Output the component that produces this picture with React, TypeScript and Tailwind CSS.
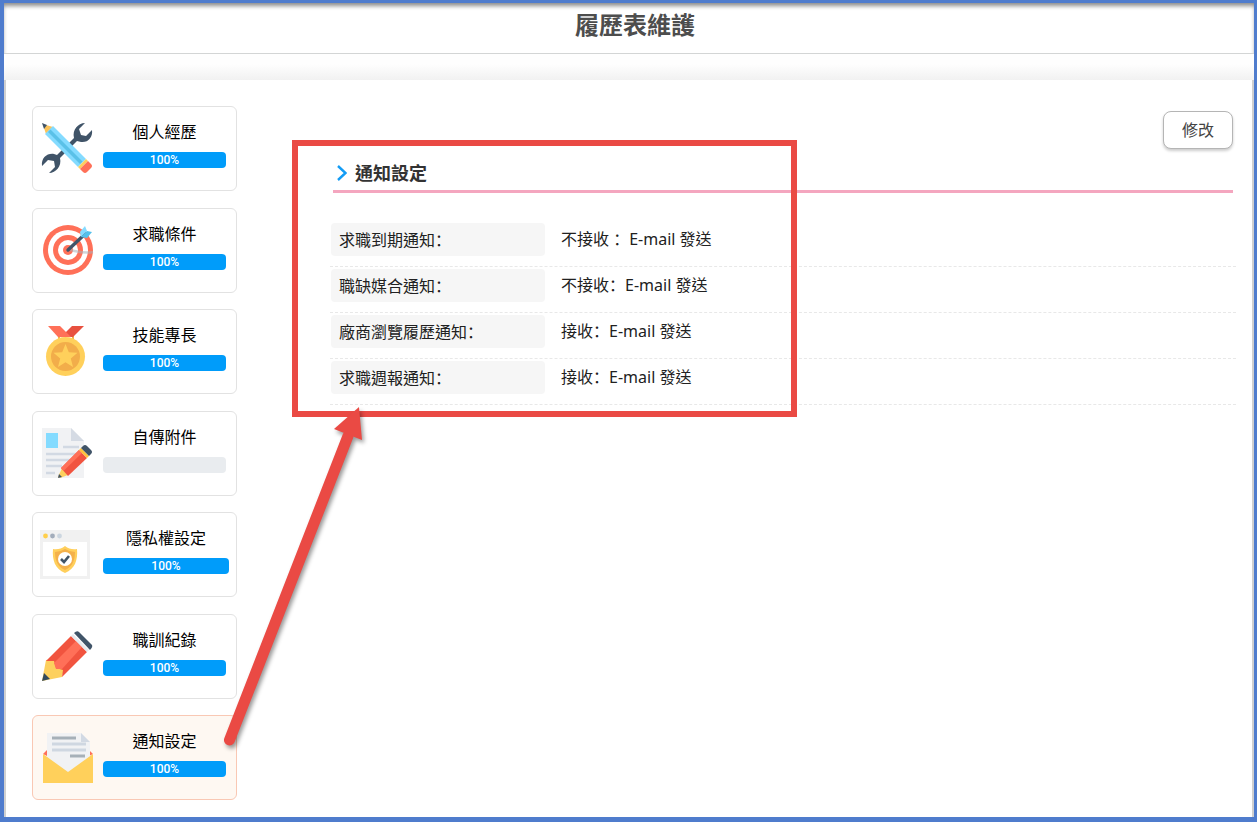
import type { ReactNode } from 'react'
import clsx from 'clsx'

type Step = { id: string; label: string; progress: number; icon: ReactNode }

const icons = {
  tools: (
    <>
      <path fill="#405468" d="M43 0 37 6 39 12 44 13 50 7C51 14 46 20 39 19L35 18 18 35C20 43 14 50 7 50L13 44 12 38 6 37 0 43C-1 35 5 30 12 31L15 32 32 15C30 7 36 0 43 0Z" />
      <path fill="#fbc35a" d="M4 2 11 4 4 11 2 5Z" />
      <path fill="#405468" d="M0 0 5 2 2 6Z" />
      <path fill="#84dbff" d="M11 3 44 36 36 44 3 11Z" />
      <path fill="#5ac1e8" d="M8.5 6.5 40.5 38.5 38 41 6 9Z" />
      <path fill="#fdd05e" d="M44 36 46 38 38 46 36 44Z" />
      <path fill="#ff7058" d="M46 38 49 41Q51 43 49 45L45 49Q43 51 41 49L38 46Z" />
    </>
  ),
  target: (
    <>
      <circle cx="26" cy="25" r="25" fill="#ff7058" />
      <circle cx="26" cy="25" r="20" fill="#fff" />
      <circle cx="26" cy="25" r="15" fill="#ff7058" />
      <circle cx="26" cy="25" r="10" fill="#fff" />
      <circle cx="26" cy="25" r="5" fill="#ff7058" />
      <path d="M28 25C34 26 42 29 51 27" stroke="#aab0b8" strokeOpacity=".55" strokeWidth="2.5" fill="none" />
      <path d="M26 25 43 9" stroke="#405468" strokeWidth="3.4" strokeLinecap="round" />
      <path fill="#84dbff" d="M43 1 45 6 39 12 38 7Z" />
      <path fill="#54c0eb" d="M45 6 50 7 45 13 39 12Z" />
    </>
  ),
  medal: (
    <>
      <path fill="#f2b04a" d="M16 9H32V15H16Z" />
      <path fill="#fff" d="M18 11H30V13H18Z" />
      <circle cx="23.5" cy="30.5" r="19.5" fill="#ffd05b" />
      <circle cx="23.5" cy="30.5" r="14.5" fill="#f2ad4a" />
      <path fill="#ffd05b" d="M23.5 18 26.8 26.2 35.5 26.8 28.8 32.4 31 41 23.5 36.2 16 41 18.2 32.4 11.5 26.8 20.2 26.2Z" />
      <path fill="#e8513f" d="M30 0H42L31 11H19Z" />
      <path fill="#ff7058" d="M6 0H18L29 11H16Z" />
    </>
  ),
  resume: (
    <>
      <path fill="#f1f2f4" d="M0 0H29L42 13V50H0Z" />
      <path fill="#d5dbe4" d="M29 0 42 13H29Z" />
      <path fill="#84dbff" d="M4 5H16V20H4Z" />
      <path d="M21 19H37M4 26H34M4 32H28M4 38H20M4 45H13" stroke="#d2d9e3" strokeWidth="2.5" />
      <path fill="#fdd05e" d="M20 40 26 47 18 50 16 49Z" />
      <path fill="#405468" d="M17 46 20 49 16 50Z" />
      <path fill="#f1543f" d="M37 22 45 30 26 48 19 40Z" />
      <path fill="#ff7058" d="M37 22 40 25 21.5 43 19 40Z" />
      <path fill="#fdc33f" d="M39 20 47 28 45 30 37 22Z" />
      <path fill="#405468" d="M41 18Q43 16 45 18L49 22Q51 24 49 26L47 28 39 20Z" />
    </>
  ),
  shield: (
    <>
      <path fill="#f1f1f1" d="M-2 1H48V50H-2Z" />
      <path fill="#fff" d="M1 13H45V47H1Z" />
      <circle cx="3.5" cy="7" r="2.4" fill="#ffcf4a" />
      <circle cx="10.5" cy="7" r="2.4" fill="#a3adbb" />
      <circle cx="17.5" cy="7" r="2.4" fill="#ccd6e0" />
      <path fill="#ffcf5b" d="M23 17Q28 21 35 20C36 31 33 40 23 44 13 40 10 31 11 20Q18 21 23 17Z" />
      <path fill="#f4b14b" d="M23 20Q28 23 33 23C33 32 30 38 23 41 16 38 13 32 13 23Q18 23 23 20Z" />
      <circle cx="23" cy="30" r="7" fill="#fff" />
      <path d="M19 30 22 33 27 27" stroke="#405468" strokeWidth="2.6" fill="none" />
    </>
  ),
  pencil: (
    <>
      <path fill="#fdd05e" d="M4 29 13 28 22 38 20 46 0 50Z" />
      <path fill="#334a5e" d="M2 42 8 48 0 50Z" />
      <path fill="#f1543f" d="M29 5 45 21 20 46 21 39 14 37 12 30 4 30Z" />
      <path fill="#ff7058" d="M34 10 40 16 20 38 14 38 12 32Z" />
      <path fill="#e6e9ee" d="M31 3 47 19 45 21 29 5Z" />
      <path fill="#405468" d="M32 2Q35 -1 37 1L50 14Q51 16 48 19Z" />
    </>
  ),
  mail: (
    <>
      <path fill="#ff7058" d="M1 22 5 18V24ZM51 22 47 18V24Z" />
      <path fill="#f1f2f4" d="M5 1H39L48 10V30L26 44 5 30Z" />
      <path fill="#d2d9e3" d="M39 1 48 10H39Z" />
      <path d="M10 6H34" stroke="#a6b0b8" strokeWidth="3" />
      <path d="M10 12H44M10 18H44" stroke="#cfd7e1" strokeWidth="3" />
      <path d="M28 24H43" stroke="#a6b0b8" strokeWidth="3" />
      <path fill="#ffd05b" d="M1 22 26 40 51 22V51H1Z" />
    </>
  ),
}

const steps: Step[] = [
  { id: 'experience', label: '個人經歷', progress: 100, icon: icons.tools },
  { id: 'conditions', label: '求職條件', progress: 100, icon: icons.target },
  { id: 'skills', label: '技能專長', progress: 100, icon: icons.medal },
  { id: 'attachments', label: '自傳附件', progress: 0, icon: icons.resume },
  { id: 'privacy', label: '隱私權設定', progress: 100, icon: icons.shield },
  { id: 'training', label: '職訓紀錄', progress: 100, icon: icons.pencil },
  { id: 'notify', label: '通知設定', progress: 100, icon: icons.mail },
]

const settings = [
  { name: '求職到期通知', value: '不接收 ', channel: 'E-mail 發送' },
  { name: '職缺媒合通知', value: '不接收', channel: 'E-mail 發送' },
  { name: '廠商瀏覽履歷通知', value: '接收', channel: 'E-mail 發送' },
  { name: '求職週報通知', value: '接收', channel: 'E-mail 發送' },
]

// the SC face keeps the fullwidth colon next to the preceding character
function Colon() {
  return <span lang="zh-CN" className="font-['Noto_Sans_CJK_SC',sans-serif]">：</span>
}

function StepCard({ step, active }: { step: Step; active: boolean }) {
  return (
    <a
      href={`#${step.id}`}
      aria-current={active ? 'page' : undefined}
      className={clsx(
        'flex h-[85px] items-start gap-[11px] rounded-md border pt-[13px] pl-[9px]',
        active ? 'border-[#f9c8b4] bg-[#fef8f2]' : 'border-[#e2e2e2] bg-white',
      )}
    >
      <svg viewBox="0 0 50 50" className="mt-[3px] size-[50px] shrink-0 overflow-visible" aria-hidden="true">
        {step.icon}
      </svg>
      <div className="min-w-[123px]">
        <div className="px-[23px] text-center text-base leading-6 whitespace-nowrap text-black">{step.label}</div>
        <div
          role="progressbar"
          aria-label={step.label}
          aria-valuenow={step.progress}
          className="mt-2 h-4 overflow-hidden rounded bg-[#e9ecef]"
        >
          {step.progress > 0 && (
            <div
              className="bg-[#009cfa] text-center font-[Roboto,sans-serif] text-xs leading-4 font-medium text-white"
              style={{ width: `${step.progress}%` }}
            >
              {step.progress}%
            </div>
          )}
        </div>
      </div>
    </a>
  )
}

function Callout() {
  return (
    <div aria-hidden="true" className="pointer-events-none">
      <div className="absolute top-[60px] left-[286px] h-[277px] w-[505px] border-6 border-[#ea4a44]" />
      <svg viewBox="220 400 160 360" className="absolute top-[320px] left-[214px] h-[360px] w-[160px] drop-shadow-[2px_3px_2px_rgba(0,0,0,0.4)]">
        <path d="M229.500 740 348 436" stroke="#ea4a44" strokeWidth="11" strokeLinecap="round" />
        <path fill="#ea4a44" d="M359 407 362 440 334 429Z" />
      </svg>
    </div>
  )
}

export default function App() {
  return (
    <div lang="zh-TW" className="flex min-h-screen flex-col border-t-3 border-r-3 border-b-5 border-l-4 border-[#4f7ccd] bg-white font-['Noto_Sans','Noto_Sans_CJK_TC',sans-serif]">
      <header className="h-[51px] border-b border-[#d3d5d5] pl-3 shadow-[inset_0_4px_4px_-1px_rgba(0,0,0,0.45)]">
        <h1 className="text-center text-2xl leading-[44px] font-bold text-[#4d4d4d]">履歷表維護</h1>
      </header>
      <div className="h-[26px] bg-linear-to-b from-[#fefefe] from-40% to-[#f1f1f1]" />

      <main className="relative flex flex-1 border-x-2 border-x-[#d0d0d0] pt-[26px] pr-4 pb-[17px] pl-[26px]">
        <nav className="flex w-[205px] shrink-0 flex-col justify-between gap-4">
          {steps.map(step => <StepCard key={step.id} step={step} active={step.id === 'notify'} />)}
        </nav>

        <section className="ml-[93px] flex-1">
          <div className="mx-[3px] mt-[5px] flex justify-end">
            <button type="button" className="h-[38px] rounded-lg border border-[#b5b5b5] bg-white px-[18px] text-base text-[#444] shadow-[0_2px_3px_rgba(0,0,0,0.2)]">
              修改
            </button>
          </div>
          <h2 className="mx-[3px] mt-[7px] flex items-center gap-2 border-b-3 border-[#f4a6bf] pl-1 text-lg leading-[34px] font-bold text-[#333]">
            <svg viewBox="0 0 10 16" className="h-4 w-[10px]" fill="none" stroke="#139cf5" strokeWidth="2.4" aria-hidden="true">
              <path d="M1 1 8.500 8 1 15" />
            </svg>
            通知設定
          </h2>
          <dl className="mt-7 text-base text-[#212121]">
            {settings.map(s => (
              <div key={s.name} className="flex gap-4 border-b border-dashed border-[#e8e8e8] pt-[2px] pb-[10px] pl-px">
                <dt className="h-[33px] w-[214px] rounded bg-[#f6f6f6] pl-2 leading-[33px]">{s.name}<Colon /></dt>
                <dd className="leading-[30px]">{s.value}<Colon />{s.channel}</dd>
              </div>
            ))}
          </dl>
        </section>

        <Callout />
      </main>
    </div>
  )
}
